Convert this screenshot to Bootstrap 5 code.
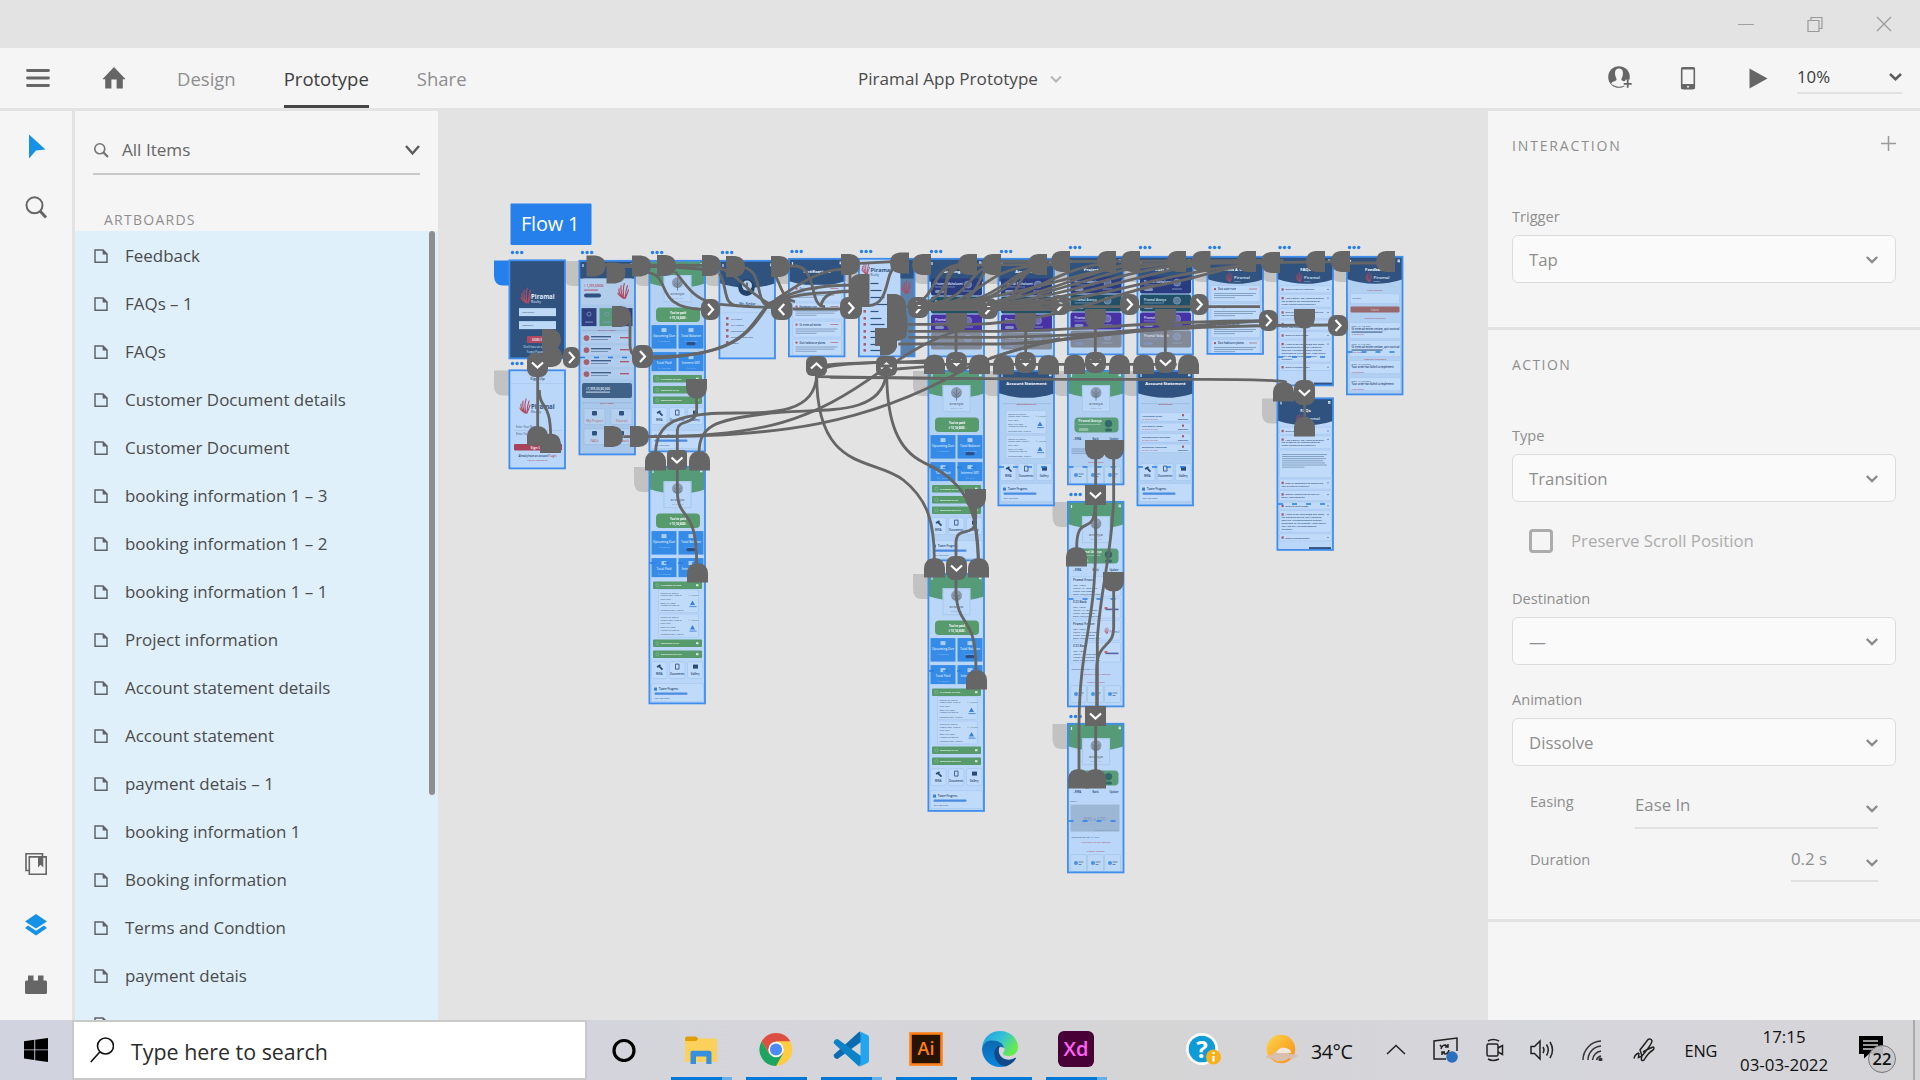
<!DOCTYPE html>
<html lang="en">
<head>
<meta charset="utf-8">
<title>Piramal App Prototype</title>
<link href="https://cdn.jsdelivr.net/npm/bootstrap@5.3.0/dist/css/bootstrap.min.css" rel="stylesheet">
<style>
body{width:1920px;height:1080px;overflow:hidden;background:#e3e3e3;font-family:"Open Sans","Noto Sans",sans-serif;font-size:16.8px;line-height:24px;color:#4b4b4b}
svg{display:block;flex:none}
.titlebar{height:48px;padding-right:28px;gap:53px}
.topbar{height:60px;background:#f5f5f5;padding-left:25px;padding-right:18px;margin-bottom:3px}
.mode{height:60px;line-height:61px;font-size:18.5px;color:#8e8e8e;margin-right:48px}
.mode.on{color:#3e3e3e;box-shadow:inset 0 -3px #454545}
.doc-title{left:858px;font-size:17.1px;padding-top:1px}
.zoombox{width:105px;height:32px;border-bottom:2px solid #e1e1e1;margin-left:30px}
.workspace{height:909px}
.rail{width:72px;margin-right:3px;background:#f5f5f5;padding:23px 0 23px}
.layers{width:363px;background:#f5f5f5}
.filterbox{margin:21px 18px 0;height:43px;border-bottom:2px solid #c8c8c8;padding-bottom:5px}
.caps{font-size:14px;letter-spacing:1.4px;color:#8e8e8e;line-height:20px}
.boards{background:#dff0fb;height:789px;overflow:hidden;padding-top:1px}
.board-item{height:48px;padding-left:19px;gap:17px;font-size:16.95px}
.thumb-bar{width:6px;height:564px;top:0;right:3px;background:#8e8e8e;border-radius:3px}
.inspector{width:432px}
.pane{background:#f5f5f5;margin-bottom:3px;padding:0 24px;color:#8e8e8e}
.lbl{font-size:14.6px;line-height:20px}
.pick{height:48px;border:1.5px solid #dcdcdc;border-radius:6px;background:#fafafa;padding:2px 17px 0 16px;margin-top:9px}
.chk{width:24px;height:24px;border:3px solid #acacac;border-radius:4px}
.under{border-bottom:2px solid #e1e1e1}
.taskbar{height:60px;background:linear-gradient(90deg,#d1d3df,#d5d5da 45%,#d5d5d6 60%,#d5d5dc 80%,#d5d5d8)}
.finder{width:515px;height:60px;border:2px solid #c9c9c9;background:#fff;padding-left:16px;font-size:21.4px;color:#2b2b2b;gap:17px}
.app{width:61px;height:60px;margin-right:14px;border-bottom:3px solid #0078d7;padding-right:2px}
.app.multi{border-image:linear-gradient(90deg,#0078d7 80%,#66b0ea 80%) 3}
.app.idle{border-color:transparent}
.tray{color:#111;font-size:17.6px}
.clock{width:110px;font-size:16.9px;line-height:28px}
</style>
<script src="https://cdn.jsdelivr.net/npm/bootstrap@5.3.0/dist/js/bootstrap.bundle.min.js"></script>
</head>
<body class="d-flex flex-column">
<div class="titlebar d-flex align-items-center justify-content-end flex-shrink-0">
  <svg width="16" height="16" stroke="#a0a0a0" fill="none"><path d="M0 8.5H16"/></svg>
  <svg width="16" height="16" stroke="#999" fill="none" stroke-width="1.2"><path d="M1 4.5H12V15.5H1ZM4 4.5V1.5H15V12.5H12"/></svg>
  <svg width="16" height="16" stroke="#999" fill="none" stroke-width="1.2"><path d="M1 1 15 15M15 1 1 15"/></svg>
</div>
<div class="topbar d-flex align-items-center flex-shrink-0 position-relative">
  <svg width="26" height="22" stroke="#666" stroke-width="2.8" stroke-linecap="round"><path d="M2.5 3.5H23.5M2.5 11H23.5M2.5 18.5H23.5"/></svg>
  <svg width="24" height="24" style="margin-left:51px;margin-right:51px" fill="#666"><path d="M12 1 23.6 13.3H20.8V22.5H14.6V13.5H9.4V22.5H3.2V13.3H.4Z"/></svg>
  <span class="mode">Design</span><span class="mode on">Prototype</span><span class="mode">Share</span>
  <div class="doc-title position-absolute d-flex align-items-center"><span>Piramal App Prototype</span>
    <svg width="14" height="10" style="margin-left:11px" fill="none" stroke="#b5b5b5" stroke-width="2"><path d="M2 2.5 7 7.5 12 2.5"/></svg></div>
  <div class="ms-auto d-flex align-items-center">
    <svg width="26" height="26"><circle cx="12" cy="12" r="10.8" fill="#666"/><path d="M12 3.6C7.8 3.6 7.6 8 8.4 11 9 13.2 9.8 13.7 9.5 14.8 9 16.5 5 16.3 4.2 18.8 8 22 14 22.8 18.5 19.8V16.6C15.6 16.2 14.6 15.7 14.4 14.8 14.2 13.7 15 13.2 15.6 11 16.4 8 16.2 3.6 12 3.6Z" fill="#f5f5f5"/><path d="M20.7 14.8V22.8M16.7 18.8H24.7" stroke="#f5f5f5" stroke-width="5"/><path d="M20.7 14.8V22.8M16.7 18.8H24.7" stroke="#666" stroke-width="1.8"/></svg>
    <svg width="16" height="26" style="margin-left:47px" fill="none" stroke="#666"><rect x="1.7" y="2.8" width="12.6" height="21" rx="1.5" stroke-width="1.6"/><path d="M1.5 21.5H14.5" stroke-width="5"/><path d="M1.5 3.5H14.5" stroke-width="2"/><circle cx="8" cy="21.8" r="1" fill="#f5f5f5" stroke="none"/></svg>
    <svg width="20" height="24" style="margin-left:52px" fill="#666"><path d="M1.5 2.4 19.5 12.5 1.5 22.6Z"/></svg>
    <div class="zoombox d-flex justify-content-between align-items-start" style="margin-left:29px"><span style="color:#3c3c3c;padding-top:3px">10%</span><svg width="14" height="26" fill="none" stroke="#5c5c5c" stroke-width="2.5"><path d="M2 12 7.5 17.2 13 12"/></svg></div>
  </div>
</div>
<div class="workspace d-flex flex-shrink-0">
  <nav class="rail d-flex flex-column align-items-center">
    <svg width="20" height="26" style="margin-left:2px" fill="#1592e6"><path d="M2 .5V24.5L9 16.5 18.5 15.5Z"/></svg>
    <svg width="24" height="24" style="margin-top:35px" fill="none" stroke="#666" stroke-width="2"><circle cx="10.5" cy="10.3" r="8"/><path d="M16 16 22 22.5" stroke-width="3"/></svg>
    <svg width="24" height="24" class="mt-auto" fill="none" stroke="#666" stroke-width="1.6"><path d="M5 18.5H2V1.7H18.5V4.5"/><path d="M5.3 4.9H22.2V22.3H5.3Z"/><path d="M14 5H19.3V15.5L16.6 12.8 14 15.5Z" fill="#666" stroke="none"/></svg>
    <svg width="24" height="24" style="margin-top:37px" fill="#1592e6"><path d="M12 1 23 8.5 12 15.5 1 8.5Z"/><path d="M4 12.5 12 17.8 20 12.5 23 15 12 22.5 1 15Z"/></svg>
    <svg width="24" height="24" style="margin-top:36px" fill="#666"><path d="M2.5 7.5H4V2.5H9.5V7.5H14V2.5H19.5V7.5H21.5Q23 7.5 23 9V19.5Q23 21 21.5 21H2.5Q1 21 1 19.5V9Q1 7.500 2.5 7.5Z"/></svg>
  </nav>
  <aside class="layers">
    <div class="filterbox d-flex align-items-center">
      <svg width="16" height="16" fill="none" stroke="#757575" stroke-width="1.6"><circle cx="6.8" cy="6.8" r="5"/><path d="M10.4 10.4 15 15" stroke-width="2.2"/></svg>
      <span style="margin-left:13px;color:#666;font-size:17.1px">All Items</span>
      <svg width="16" height="12" class="ms-auto" fill="none" stroke="#5c5c5c" stroke-width="2.4"><path d="M2 2 8.5 9.5 15 2"/></svg>
    </div>
    <div class="caps" style="padding:35px 0 1px 29px;letter-spacing:1.25px">ARTBOARDS</div>
    <div class="boards position-relative" id="boards"><div class="thumb-bar position-absolute"></div></div>
  </aside>
  <main style="width:1050px"><svg id="canvas" width="1050" height="909" viewBox="438 111 1050 909"></svg></main>
  <aside class="inspector d-flex flex-column">
    <section class="pane" style="height:216px;padding-top:25px">
      <div class="d-flex justify-content-between"><span class="caps" style="letter-spacing:1.85px">INTERACTION</span><svg width="16" height="16" stroke="#999" stroke-width="1.5"><path d="M8.500 0V15M1 7.5H16"/></svg></div>
      <div class="lbl" style="margin-top:50px">Trigger</div>
      <div class="pick d-flex align-items-center justify-content-between"><span>Tap</span><svg width="12" height="9" class="cv"></svg></div>
    </section>
    <section class="pane" style="height:589px;padding-top:25px">
      <div class="caps">ACTION</div>
      <div class="lbl" style="margin-top:50px">Type</div>
      <div class="pick d-flex align-items-center justify-content-between"><span>Transition</span><svg class="cv"></svg></div>
      <div class="d-flex align-items-center" style="margin:26px 0 34px 17px;height:26px;gap:18px;color:#acacac"><span class="chk"></span><span>Preserve Scroll Position</span></div>
      <div class="lbl">Destination</div>
      <div class="pick d-flex align-items-center justify-content-between"><span>—</span><svg class="cv"></svg></div>
      <div class="lbl" style="margin-top:24px">Animation</div>
      <div class="pick d-flex align-items-center justify-content-between"><span>Dissolve</span><svg class="cv"></svg></div>
      <div class="d-flex justify-content-between" style="padding:25px 18px 0"><span class="lbl">Easing</span><div class="under d-flex justify-content-between" style="width:243px;height:38px;padding-top:2px"><span>Ease In</span><svg class="cv" style="margin-top:11px"></svg></div></div>
      <div class="d-flex justify-content-between" style="padding:18px 18px 0"><span class="lbl" style="margin-top:2px">Duration</span><div class="under d-flex justify-content-between" style="width:87px;height:35px"><span>0.2 s</span><svg class="cv" style="margin-top:11px"></svg></div></div>
    </section>
    <section class="pane flex-grow-1 mb-0"></section>
  </aside>
</div>
<footer class="taskbar d-flex flex-shrink-0 align-items-center">
  <svg width="24" height="24" style="margin:0 24px" fill="#000"><path d="M0 3.3 10.3 1.8V11.4H0ZM11.2 1.7 24 0V11.4H11.2ZM0 12.3H10.3V22L0 20.6ZM11.2 12.3H24V24L11.2 22.2Z"/></svg>
  <div class="finder d-flex align-items-center"><svg width="24" height="26" fill="none" stroke="#111" stroke-width="1.6"><circle cx="15.5" cy="9" r="8"/><path d="M10 14.8.8 25"/></svg><span style="padding-top:3px">Type here to search</span></div>
  <div class="d-flex" style="margin-left:9px">
    <span class="app idle d-flex justify-content-center align-items-center" style="padding-right:6px"><svg width="26" height="26" fill="none" stroke="#000" stroke-width="3.2"><circle cx="13" cy="14.500" r="10"/></svg></span>
    <span class="app multi d-flex justify-content-center align-items-center" style="padding-top:2px"><svg width="34" height="30"><path d="M1 4Q1 1.5 3 1.5H12L15.5 5H32Q33 5 33 6V12H1Z" fill="#e19d05"/><path d="M1 6H12L15 3.6H32Q33 3.6 33 5V27H1Z" fill="#fcd15b"/><path d="M6.5 29V18Q6.5 15.8 8.5 15.8H25.5Q27.5 15.8 27.5 18V29H22.3V21.5H12V29Z" fill="#3690dc"/></svg></span>
    <span class="app d-flex justify-content-center align-items-center"><svg width="34" height="34" viewBox="-17 -17.500 34 34"><circle r="16.3" fill="#fdcc42"/><path d="M-14.3-8.25A16.5 16.5 0 0 1 14.3-8.25L0-8.25-7.1 4.1Z" fill="#dd4f43"/><path d="M-14.3-8.25A16.5 16.5 0 0 0 0 16.5L7.1 4.1H-7.1Z" fill="#1da362"/><circle r="7.7" fill="#fff"/><circle r="6.1" fill="#4c8bf5"/></svg></span>
    <span class="app multi d-flex justify-content-center align-items-center"><svg width="36" height="36"><path d="M1.5 26.5Q0 25 1 23.5L26.5.5 28 3V11L4.5 28Q3 28 1.5 26.5Z" fill="#0a6cae"/><path d="M1 12.5Q0 11 1.500 9.5L3.5 8Q5 8 6 9L28 25V33L26 35.5Z" fill="#0c83c8"/><path d="M26.5.3 35 4.3Q36 5 36 6.5V29.5Q36 31 35 31.8L26.5 35.8Q27.5 35 27.5 33V3Q27.5 1 26.5.3Z" fill="#24a5f0"/></svg></span>
    <span class="app d-flex justify-content-center align-items-center"><svg width="34" height="34"><rect x="1.5" y="1.5" width="31" height="31" fill="#261300" stroke="#ff7f18" stroke-width="2.6"/><text x="17" y="23" text-anchor="middle" font-size="18" font-weight="600" fill="#ff7f18">Ai</text></svg></span>
    <span class="app d-flex justify-content-center align-items-center"><svg width="38" height="36"><defs><linearGradient id="ea" x1="0" y1="0" x2="1" y2=".5"><stop offset="0" stop-color="#1b9de2"/><stop offset=".55" stop-color="#35c1d8"/><stop offset="1" stop-color="#66eb4e"/></linearGradient><linearGradient id="eb" x1="0" y1="0" x2="0" y2="1"><stop offset="0" stop-color="#0f68ae"/><stop offset="1" stop-color="#0a86e0"/></linearGradient></defs><path d="M0 17C1 6 9 0 18 0 29 0 36 8 36 16 36 22 31 25 27 25 23 25 20.500 23.500 21 22 23 20 23 18 22 16.500 19 11 4 8 0 17Z" fill="url(#ea)"/><path d="M0 18C1 12 5 9.500 10 9.500 17 9.500 21.500 13 22 17 15 13 10 22 16 29.500 18 33 22 35 24 35.200 10 39 0 29 0 18Z" fill="url(#eb)"/><path d="M18 14.500C12 16 11 23 14 29 17 34 21 36 25 35 29 33.500 33 30 34 27 33 26 31 29 26.500 28.700 19 28.500 14.500 22 18 14.500Z" fill="#114a8b"/></svg></span>
    <span class="app multi d-flex justify-content-center align-items-center"><svg width="36" height="36"><rect width="36" height="36" rx="6" fill="#470137"/><text x="18" y="25" text-anchor="middle" font-size="20" font-weight="600" textLength="25" fill="#ff61f6">Xd</text></svg></span>
  </div>
  <div class="tray d-flex align-items-center" style="margin-left:65px">
    <svg width="36" height="36"><ellipse cx="16" cy="17" rx="16" ry="16" fill="#fff"/><circle cx="16" cy="17" r="13.3" fill="#0f9ad8"/><text x="16" y="26" text-anchor="middle" font-size="24" font-weight="700" fill="#fff">?</text><circle cx="27.5" cy="25" r="7.5" fill="#f8b11c"/><path d="M27.5 24V29.5M27.5 20V22" stroke="#fff" stroke-width="2.2"/></svg>
    <svg width="36" height="36" style="margin-left:42px"><defs><linearGradient id="sun" x1="0" y1="0" x2="1" y2="1"><stop offset="0" stop-color="#fcd64b"/><stop offset="1" stop-color="#f98b12"/></linearGradient></defs><circle cx="17" cy="17" r="14.3" fill="url(#sun)"/><path d="M2 26Q1 23 8 23 12 17 18 18 24 18 25 22 34 22 34 24 30 27 24 26.5 22 30 12 29 9 26 2 26Z" fill="#d8bfae"/><path d="M12 21Q16 14 22 16 28 18 27 21Z" fill="#efe6dc"/></svg>
    <span style="margin-left:11px;font-size:19.6px;padding-top:4px;letter-spacing:-.4px">34°C</span>
    <svg width="20" height="14" style="margin-left:33px" fill="none" stroke="#222" stroke-width="1.5"><path d="M1 11 10 2.5 19 11"/></svg>
    <svg width="26" height="26" style="margin-left:27px" fill="none" stroke="#222" stroke-width="1.5"><path d="M24 14V1L1 4V22H13M7 8 9 10.500M8 12Q9 8 12.500 8L15 10M15 7V10H12M16 13Q15 17 12 17L9 15M9 18V15H12"/><circle cx="19" cy="20" r="5.8" fill="#2b6fbd" stroke="none"/></svg>
    <svg width="18" height="24" style="margin-left:27px" fill="none" stroke="#222" stroke-width="1.5"><rect x="1" y="6" width="11" height="12" rx="1.5"/><path d="M12 10 16.5 7.5V16.5L12 14M2 3Q7 0 13 3M2 21Q7 24 13 21"/></svg>
    <svg width="26" height="24" style="margin-left:26px" fill="none" stroke="#222" stroke-width="1.5"><path d="M1 8.5H4.5L10 3V21L4.5 15.5H1ZM13 9Q15 12 13 15M16.5 6.5Q20 12 16.5 17.5M20 4Q25 12 20 20"/></svg>
    <svg width="22" height="22" style="margin-left:26px" fill="none" stroke="#333" stroke-width="1.5"><path d="M1 21A19 19 0 0 1 19 2M6 21A14 14 0 0 1 19 7M10.5 21A10 10 0 0 1 19 12M14.5 21A6 6 0 0 1 19 17"/><circle cx="18.5" cy="20.5" r="1.3" fill="#333"/></svg>
    <svg width="24" height="24" style="margin-left:29px" fill="none" stroke="#222" stroke-width="1.5"><path d="M9 18 7 12 15 1.5Q18 0 19 3 19 6 9 18L5.5 19.5 6 15M1 20.5Q2 16 6 15M10 14Q15 11 20 9 22 10 20 12 15 15 11 22 7 24 9 18"/></svg>
    <span style="margin-left:28px;font-size:16.3px;letter-spacing:-.2px;padding-top:1px">ENG</span>
    <div class="clock text-center" style="margin-left:12px;padding-top:1px">17:15<br>03-03-2022</div>
    <svg width="40" height="46" style="margin-left:19px"><path d="M1 9H25V27H11L6 31.5V27H1Z"/><path d="M5 14H20M5 18H20M5 22H16" stroke="#ccc" stroke-width="1.5"/><circle cx="24" cy="32" r="13.500" fill="#c9c9cc" fill-opacity=".9" stroke="#777"/><text x="24" y="38" text-anchor="middle" font-size="16.5" font-weight="600" fill="#111">22</text></svg>
  </div>
  <span class="ms-auto" style="width:2px;height:60px;background:#a9a9ae;margin-right:5px"></span>
</footer>
<script>
// layer list
const names=['Feedback','FAQs – 1','FAQs','Customer Document details','Customer Document','booking information 1 – 3','booking information 1 – 2','booking information 1 – 1','Project information','Account statement details','Account statement','payment detais – 1','booking information 1','Booking information','Terms and Condtion','payment detais',''];
document.getElementById('boards').insertAdjacentHTML('beforeend',names.map(n=>`<div class="board-item d-flex align-items-center"><svg width="14" height="16" fill="none" stroke="#5f6468" stroke-width="1.5"><path d="M1 2H9L13 6V14.2H1Z"/><path d="M8.6 1.6 13.4 6.4H8.6Z" fill="#5f6468" stroke="none"/></svg><span>${n}</span></div>`).join(''));
document.querySelectorAll('.cv').forEach(s=>{s.setAttribute('width',14);s.setAttribute('height',10);s.style.marginRight='-1px';s.innerHTML='<path d="M1.8 2 7 7 12.2 2" fill="none" stroke="#8a8a8a" stroke-width="2.4"/>'});

// artboard drawing helpers, in artboard-local pixels (57 wide)
const NV='#30527f',GR='#569b78',LT='#bad7f9',BL='#358be5';
const R=(x,y,w,h,f,r=0,e='')=>`<rect x="${x}" y="${y}" width="${w}" height="${h}" fill="${f}" rx="${r}" ${e}/>`;
const T=(x,y,s,t,f='#34506f',a='start',w=400)=>`<text x="${x}" y="${y}" font-size="${s}" fill="${f}" text-anchor="${a}" font-weight="${w}">${t}</text>`;
const card=(x,y,w,h)=>R(x,y,w,h,'#c0dafa',1,'stroke="#a5c5ec" stroke-width=".6"');
const ham='<path d="M4 3.5v3M51 3.5h2.5M51 5h2.5" stroke="#cfe2f7" stroke-width="1.2"/>';
const head=(c,t)=>`<path d="M0 0H57V22.5Q28.5 32 0 22.5Z" fill="${c}"/>`+ham+(t?T(28.5,14,4.2,t,'#fff','middle',700):'');
const hand=(x,y,s,c='#b04a60')=>`<g transform="translate(${x} ${y}) scale(${s})" fill="none" stroke="${c}" stroke-width="1.1" stroke-linecap="round"><path d="M5 14Q0 8 1 5M5 14Q2 7 3 2M6 14Q4 7 6 0M7 14Q7 7 9 2M7 14Q9 9 10 6M6 14Q1 12 0 9"/></g>`;
const logoG=R(15,15,27,26,LT,0,'stroke="#a9cbe9" stroke-width="1.2"')+'<circle cx="28.5" cy="22" r="5.5" fill="#8c9cae"/><path d="M28.5 18V30M25 21 28.500 25 32 21M24.500 24 28.500 27 32.500 24" stroke="#5f7187" stroke-width=".8" fill="none"/>'+T(28.500,34,4,'aranya','#74879c','middle',700)+T(28.5,38,2.2,'Sector 129','#8798ac','middle');
const tile=(x,y,h,a,b)=>R(x,y,25,h,BL)+R(x+10,y+3,5,4,'#a9cff8')+T(x+12.5,y+12,3.1,a,'#d6e9fd','middle',600)+T(x+12.5,y+16.5,2.5,b,'#9dc8f7','middle');
const gbar=(y,t)=>R(4,y,49,7.5,'#579a6c',1)+`<circle cx="8.5" cy="${y+3.7}" r="1.6" fill="none" stroke="#8fc09c" stroke-width=".6"/>`+T(12,y+4.8,2.3,t,'#eef8ee','start',700)+R(47,y+2.6,2.5,2,'#d3ecd8');
const trio=(y,g=0)=>g?[3,20,37].map(x=>R(x,y,16,17,'#bcd8f8',1,'stroke="#9fc6e2" stroke-width=".7"')+`<circle cx="${x+5.500}" cy="${y+8.500}" r="2" fill="#4d92e2"/>`+R(x+8,y+7,5,.8,'#4f7297')+R(x+8,y+9.5,3,.8,'#4f7297')).join(''):
 [[2.5,'RERA'],[20.500,'Documents'],[38.500,'Gallery']].map(([x,t],i)=>R(x,y,15.5,17,'#bfdafa',2,'stroke="#a2c6ef" stroke-width=".7"')+(i==0?`<path d="M${x+5.500} ${y+5.500}l3.500 -2M${x+7.500} ${y+4.500}l3.500 3.500" stroke="#2b4a73" stroke-width="1.700"/>`:i==1?`<path d="M${x+6} ${y+2.500}h3.500v5h-3.500z" fill="none" stroke="#2b4a73" stroke-width=".8"/>`:R(x+5.500,y+3,5,4,'#2b4a73'))+T(x+7.7,y+13.500,2.600,t,'#20406a','middle',600)).join('');
const prog=y=>card(2.5,y,52,18)+R(5,y+4,3,3,'#3a80d8')+T(10,y+6.5,2.6,'Tower Progress','#20406a','start',600)+R(5.500,y+9,33,2.2,'#4a8be0',1)+T(5.500,y+15,2.3,'72%: On Time');
const stat=(x,y,w)=>card(x,y,w,23)+T(x+2,y+4,2,'Receipt No: 789542')+T(x+2,y+6.500,2,'Cheque Date: 12/05/21')+T(x+2,y+10,2,'Type: NEFT')+T(x+2,y+14,2,'Bank: ICICI Bank')+T(x+2,y+16.500,2,'Account No: 000123')+T(x+2,y+21,2,'Collection Date: 12/05/21')+T(x+w-10,y+6.500,2.1,'₹ 1,02,000','#4d7d6f')+`<path d="M${x+w-6} ${y+11}l2.500 4.500h-5z" fill="#3a7edb"/>`+R(x+w-9,y+16.500,7,1,'#4b88dc');
const dash=open=>head(GR)+logoG+R(7,47,44,14.5,'#579a6c',4)+T(29,53,2.800,'You’ve paid','#fff','middle',700)+T(29,58,2.800,'₹ 13,14,668/-','#fff','middle',700)
 +tile(2.5,64.500,23.500,'Upcoming Due','₹ 52,08.00')+tile(29.500,64.500,23.500,'Total Balance','₹ 10,50,000')+R(37.500,81.500,9,3.200,'#2b4f86',1.500)+tile(2.5,91.500,19,'Total Paid','₹64,50,650')+tile(29.500,91.500,19,'Interest GST','₹71,245')
 +(open?gbar(115,'PAYMENT STATUS')+stat(9.500,123,40)+stat(9.500,147.500,40)+gbar(173,'BOOKING PLAN')+gbar(184,'BOOKING DETAILS')+trio(195)+prog(217)
 :gbar(114.5,'PAYMENT STATUS')+gbar(125.500,'BOOKING PLAN')+gbar(136,'BOOKING DETAILS')+trio(147)+prog(170));
const proj=t=>R(0,0,57,99,'#b5d3f5')+head(NV,t)+[['#2a3c80','Piramal Mahalaxmi'],['#215168','Piramal Aranya'],['#4931a6','Piramal Revanta'],['#828a98','Piramal Vaikunth']].map(([c,n],i)=>R(3,20+i*18,51,17,c,2)+T(7,26+i*18,3,n,'#dfe6f5','start',600)+R(7,28+i*18,20,.7,'#8d9cc4')+R(7,31.500+i*18,9,3,'#8292b8',1.500)+`<circle cx="40" cy="${26+i*18}" r="3.500" fill="#93a3c8" fill-opacity=".5" stroke="#93a3c8" stroke-width=".7"/>`+R(35,32+i*18,10,.8,'#93a3c8')).join('');
const para=(x,y,w,n)=>Array.from({length:n},(_,i)=>R(x,y+i*2.1,i==n-1?w*.5:w-(i*3%5),.8,'#7493b6')).join('');
const notif=(y0)=>[['Duis aute irure',0],['Excepteur sint',18],['Ut enim ad minim',36],['Duis habitasse platea',54]].map(([t,d])=>card(4,y0+d,49,16)+R(7,y0+d+2.500,2,2,'#b0506a')+T(11,y0+d+4.800,2.500,t,'#20406a','start',600)+R(42,y0+d+3,8,.8,'#b47082')+para(7,y0+d+7.500,42,3)).join('');
const brand=(x,y)=>hand(x,y,.62)+T(x+8,y+6,4.300,'Piramal','#dbe8f7','start',600)+T(x+8,y+9,2.300,'Realty','#c8d7ea');
// FAQ entries are stored line by line
const faqs=(y,h,ex)=>{let s='';const q=[['What is TDS on Property?'],['I am a Buyer. Do I need to deduct','tax at source for consideration of','under construction property?'],...(ex?[[]]:[]),['Who is responsible to deduct the','TDS on sale of Property?'],['Would I deduct tax on the full','seller, not Resident?'],['What is Form 26QB?'],['I have filled Form 26QB and made','the payment online, but I forgot to','save the Acknowledgment Number','generated at TIN website. From where','can I get the Acknowledgment','Number?'],['What is Registration?']];
 for(const ls of q){const n=ls.length||8,hh=n*2.900+4.300;if(y+hh>h)break;s+=card(2.5,y,52,hh);if(!ls.length)s+=para(5,y+4,45,7);else{s+=R(4.500,y+2.700,2.200,2.400,'#a8596f')+ls.map((l,k)=>T(k?4.500:8.300,y+4.900+k*2.900,2.400,l,'#2c4b74','start',600)).join('')+R(50,y+3.500,2,.7,'#5d7ea5')}y+=hh+1.400}return s};
const pinfo=()=>head(GR)+logoG+R(7,47,44,15,'#5a9b7a',4)+T(11,51.500,3,'Piramal Aranya','#dff1e5','start',700)+R(11,53.500,22,.8,'#94c4a8')+R(11,57.500,10,3,'#8dbf9f',1.500)+'<circle cx="41" cy="53" r="3.700" fill="#2f6a66"/>'+R(37.500,58,7,3,'#2f6a66',1.500)+T(6,69.500,2.500,'▪ RERA','#20406a','start',600)+T(25,69.500,2.500,'Bank','#20406a','start',600)+T(42,69.500,2.500,'Update','#20406a','start',600);
const signin=R(0,0,57,99,NV)+hand(12,28,1.05)+T(22,39,6.100,'Piramal','#dfeaf7','start',700)+T(22,43,3.500,'Realty','#dfeaf7')+R(10,48,37,8,'#bcd9f8')+T(13,53,2.500,'Username')+R(10,61,37,8,'#bcd9f8')+T(13,66,2.500,'Password')+R(18,76,22,7,'#b04a60',1)+T(29,81,3.200,'SIGN IN','#fff','middle',600)+T(28.500,88,2.600,'Don’t have an account?','#dfeaf7','middle')+T(28.500,92.500,2.600,'Forgot Password?','#dfeaf7','middle');
const content={
signin,
signup:T(28.500,10,4,'Sign Up','#34506f','middle',600)+R(2,13,53,.6,'#a6c5ea')+hand(11,29,1)+T(22,39,6.100,'Piramal',NV,'start',700)+T(22,43,3.500,'Realty',NV)+T(7,58,2.700,'Enter Your Name')+R(4,60,49,.5,'#9fb9da')+T(7,65,2.700,'Enter Your Email')+R(5,74,48,6.300,'#a84258',1)+T(28,78.500,3.500,'Sign Up','#fff','middle',600)+T(28.500,86.500,2.500,'Already have an account? <tspan fill="#b04a60">Login</tspan>','#20406a','middle',600)+T(28.500,90.500,2.500,'Forgot Password?','#b04a60','middle'),
home:R(0,0,57,195,'#a9c7e9')+R(0,0,57,18,NV)+ham+R(2.500,18,52,26,'#b2cdec',3)+T(5,26,3,'₹ 1,255,00000','#b04a60','start',600)+R(5,29,14,.9,'#b04a60')+R(5,33,17,4,NV,2)+hand(39,23,1.05)
 +R(2.500,47.500,15,18,'#2e3f80')+R(20.500,47.500,15,18,'#579a7a')+R(38.500,47.500,15,18,'#2e3f80')+[10,28,46].map(x=>`<circle cx="${x}" cy="53.500" r="2" fill="none" stroke="#7f97c2" stroke-width=".8"/>`+R(x-4,61,8,1,'#7f97c2')).join('')+R(3,69.500,50,.6,'#91afd2')+T(28,70.800,2.100,'RECENT PAYMENT','#a84a60','middle',600)
 +[77.500,89.500,101.500,113.500].map(y=>R(3,y-4.500,51,9.500,'#b1ccec',1)+`<circle cx="7.500" cy="${y}" r="2.900" fill="#a5606c"/>`+R(12,y-2,20,1.200,'#33507a')+R(12,y+1,17,.9,'#6e89ac')+R(41,y-1,9,1.200,'#b04a60')).join('')
 +R(3,122.500,50,15,'#416288',2)+T(7,129,3,'₹1,955,00,80,000','#eaf3ff','start',600)+R(7,131,24,1,'#cfe0f5')+R(3,142,50,.6,'#91afd2')+T(28,143.200,2.200,'QUICK MENU','#a84a60','middle',600)
 +[[5,148,'My Project'],[32,148,'Tutorial'],[5,168,'FAQs'],[32,168,'Feedback']].map(([x,y,t])=>R(x,y,21,16,'#b5cfee',1,'stroke="#9cbcdf" stroke-width=".7"')+R(x+8,y+2.500,5,4.500,NV,1)+T(x+10.500,y+13,3.400,t,'#b05a6a','middle')).join(''),
dash:R(0,0,57,192,'#b3d1f3')+dash(0),open:dash(1),
profile:head(NV)+'<circle cx="27.500" cy="27" r="8.300" fill="#224267"/><circle cx="28" cy="25" r="5" fill="#b9cfe8"/><path d="M28 22v6l3 2" stroke="#30527f" stroke-width="1.500" fill="none"/>'+T(28.500,44,3.500,'Mr. Kedar','#30527f','middle',600)+R(3,52,50,.5,'#a3c2e8')+[58,64,70,76,82].map((y,i)=>R(7,y-1.500,2.500,2.500,'#a9586b')+T(12,y+1,2.400,['My Profile','My Account','Documents','Terms & Conditions','Logout'][i],'#20406a')).join(''),
notes:head(NV,'Notifications')+notif(26.500),
terms:R(0,0,57,98,'#b1cff1')+head(NV,'Terms & Cond')+brand(19,16)+notif(29),
menu:R(0,0,42,99,LT)+R(42,0,15,99,'#5b80aa')+R(42,0,15,20,NV)+hand(3,4,.8)+T(12,13,5.500,'Piramal',NV,'start',700)+T(12,17,3,'Realty',NV)+hand(43,22,.9)+[25,32,39,46,53,60,66,73,79,86,92].map((y,i)=>R(5,y-1.500,2.500,2.500,'#a9586b')+R(12,y-.7,8+i%4*3,1.200,'#31547f')).join(''),
proj1:proj('Booking Info'),proj2:proj('Account St'),proj3:proj('Project Info'),proj4:proj('Cust. Docs'),
statement:R(0,0,57,135,'#b1cff1')+head(NV,'Account Statement')+R(4,33,49,.5,'#8fa9cf')+T(28.500,34,2.200,'BOOKING DETAILS','#a84258','middle',600)+stat(8,40,40)+stat(8,65,40)+trio(93)+prog(113),
docs:R(0,0,57,135,'#b1cff1')+head(NV,'Account Statement')+R(4,33,49,.5,'#8fa9cf')+T(28.500,34,2.200,'DOCUMENTS','#a84258','middle',600)+['Agreement to sell','Title search report','Encumbrance certificate','Occupancy certificate'].map((t,i)=>card(3,42+i*10.500,51,8.500)+T(5,46+i*10.500,2.400,t,'#20406a','start',600)+T(5,49.300+i*10.500,2.100,'on 2nd Nov 2021','#a05a70')+R(45,43.500+i*10.500,2,2.200,'#a05a70')+T(46,49.300+i*10.500,2.100,'Download','#20406a','middle',600)).join('')+trio(93)+prog(113),
pinfo:R(0,0,57,114,'#b1cff1')+pinfo()+para(4,78,40,3)+T(28.500,92,2.500,'Other Project','#a84258','middle')+trio(96,1),
banks:pinfo()+[['Piramal Finance',75],['ICICI Bank',97],['Piramal Finance',119],['ICICI Bank',141]].map(([t,y],i)=>card(3,y,50,19.500)+T(5.500,y+4,2.800,t,'#20406a','start',600)+T(5.500,y+9,2.300,'IFSC: Admin','#20406a')+T(5.500,y+12,2.300,'Mobile: +91 7890 0000','#20406a')+T(5.500,y+15,2.300,'Phone: 022 7000000','#20406a')+T(5.500,y+18,2.300,'Email: help@piramal.com','#20406a')+(i%2?R(38,y+10,13,1.600,'#5563a8')+R(37,y+8.500,3,2,'#c26060'):hand(37,y+7,.4)+T(42,y+12,2.800,'Piramal','#51618d'))).join('')+T(4,168,2.500,'Registration no: <tspan fill="#3a80d8">P51800</tspan>')+T(28.500,173,2.500,'Click here to visit website','#a84258','middle')+T(28.500,181,2.500,'Project Partner','#a84258','middle')+trio(184,1),
update:pinfo()+T(3,78,2.500,'Date 1')+R(3,81,49,27,'#9cb6d6')+T(27,97,5,'300 x 170','#7890ae','middle')+T(51,107,2.200,'Powered by HTML.COM','#7890ae','end')+T(4,114,2.500,'Registration no: <tspan fill="#3a80d8">P51800</tspan>')+T(28.500,119,2.500,'Click here to visit website','#a84258','middle')+T(28.500,128,2.500,'Project Partner','#a84258','middle')+trio(131,1),
faq:head(NV,'FAQs')+brand(19,16)+faqs(29,126)+R(37,126,20,4,NV),
faq2:head(NV,'FAQs')+brand(19,16)+faqs(29,150,1)+R(32,149,22,4,NV),
feedback:R(0,0,57,139,'#b1cff1')+head(NV,'Feedback')+brand(19,16)+T(28.500,34,2.500,'New Request','#a84258','middle')+card(4,37,49,10)+T(6,42,2.500,'Subject')+R(4,50,49,6,'#98686f',1)+T(28.500,54,2.600,'Submit','#d9c9d2','middle')+T(28.500,62,2.500,'Pending Requests','#a84258','middle')+T(28.500,103,2.500,'Resolved Requests','#a84258','middle')+[69,87,107,124].map((y,i)=>card(3,y-3,51,i>1?13:16)+T(5,y+1,2.300,'Date: 19 Aug 2021')+T(5,y+4.500,2.500,i>1?'Your order has failed to implement':'Ut enim ad minim veniam, quis nostrud','#20406a','start',600)+(i>1?'':R(5,y+6,31,.9,'#20406a'))+T(5,y+9.500,2.300,'View Status','#a84258')).join('')
};
const art=[[509,260.5,98.5,'signin'],[509,370.5,98.5,'signup'],[579,261,194,'home'],[649,261,191,'dash'],[649,467,237,'open'],[719,261,98,'profile'],[788.5,259,98,'notes'],[858.5,259,98,'menu'],[928,259,98,'proj1'],[998,259,98,'proj2'],[1067.500,257,98,'proj3'],[1137,257,98,'proj4'],[1207,257,97.500,'terms'],[1277,257,129,'faq'],[1346.500,257,138,'feedback'],[928,371,190,'dash'],[928,574,237.500,'open'],[998,371,135,'statement'],[1067.500,371,114,'pinfo'],[1067.500,502,205,'banks'],[1067.500,724,149,'update'],[1137,371,135,'docs'],[1277,398.500,152,'faq2']];
let s='<defs>'+art.map((a,i)=>`<clipPath id="c${i}"><rect width="56" height="${a[2]}"/></clipPath>`).join('')+'</defs>';
art.forEach(([x,y,h,k],i)=>{
 s+=`<path d="M${x} ${y}h-15v15q0 10 9 10h6z" fill="${i?'#c2c2c2':'#2680eb'}"/>`;
});
art.forEach(([x,y,h,k],i)=>{
 s+=`<g transform="translate(${x} ${y-.4})"><g clip-path="url(#c${i})">${R(0,0,57,h,LT)}${content[k]}</g>${R(.4,.2,55.600,h-.4,'none',0,'stroke="#3f8ded" stroke-width="1.800"')}</g>`;
});
// viewport fold lines
[[579,357.500],[649,563],[928,467.500],[928,671],[998,467],[1067.500,467],[1137,467],[1067.500,599],[1067.500,821],[1277,357],[1277,504],[1346.500,352]].forEach(([x,y])=>s+=`<path d="M${x+1} ${y}h56" stroke="#2680eb" stroke-width="1.300" stroke-dasharray="5 9"/>`);
// artboard menus
[[511,252.500],[511,363.500],[581,252.500],[651,252.500],[721,252.500],[790.500,251.500],[860,251.500],[930,251.500],[1000,251.500],[1069,247.500],[1139,247.500],[1208.500,247.500],[1278.500,247.500],[1348,247.500],[1069.500,494.500],[1069.500,716.500]].forEach(([x,y])=>{for(let i=0;i<3;i++)s+=`<circle cx="${x+1.500+i*4.600}" cy="${y}" r="1.700" fill="#2680eb"/>`});
// wires, drawn on sheets of one-third pixel units
const W=(ox,oy,ps)=>s+=`<g transform="translate(${ox} ${oy}) scale(.33333)" fill="none" stroke="#666" stroke-width="8.500">${ps.map(p=>`<path d="${p}"/>`).join('')}</g>`;
W(480,190,['M173 555V715','M178 600C178 660 212 630 212 740','M240 500H265','M450 380V465C452 495 460 495 475 498','M500 247C580 255 515 355 668 358','M585 245C620 285 640 325 690 335','M370 225 690 226','M430 230H560L700 240','M720 343C800 350 830 352 880 352','M718 250C745 290 725 345 775 348','M715 232C780 255 800 310 875 345','M790 232C855 245 820 345 872 350','M920 228H950C1015 240 985 350 1035 350','M885 255C905 290 905 325 945 335','M1085 238C1010 240 950 290 885 330','M1115 285C1000 287 950 300 868 340','M868 340C810 400 800 500 520 500','M1115 305C960 308 920 320 865 345C800 440 760 495 520 505','M938 357H1080','M1115 303C1060 303 1030 310 1022 350','M1140 220 1240 215','M1242 235C1215 250 1230 345 1165 347','M1110 250V335','M1040 532C1100 515 1240 520 1340 512','M1040 525C1100 518 1240 515 1340 518','M1010 560 1440 566','M1010 555C1005 700 800 660 680 672C590 680 530 700 527 785','M1010 555C1010 850 1180 800 1270 870C1345 930 1363 1000 1363 1110','M1220 555C1222 700 1255 780 1330 817C1450 870 1495 950 1495 1110','M1218 555C1200 690 1000 650 850 672C700 690 660 710 657 785','M650 620V660C645 710 595 685 592 720V785','M430 740H510C900 740 1160 700 1440 545C1500 510 1600 480 1740 445','M510 740C850 740 1000 690 1200 545C1280 495 1350 445 1440 420','M592 840V900C592 1000 650 940 650 1120','M1487 955V985C1487 1050 1428 1000 1428 1060V1110','M1480 940C1482 1000 1494 1050 1495 1110','M1428 1150V1210C1435 1320 1488 1270 1488 1440']);
W(830,235,['M200 402 290 395','M230 215H1290','M240 213C400 205 560 205 700 200','M240 221C420 228 560 222 700 215','M290 206H690','M290 224H690','M235 205C330 205 290 90 400 88','M235 210C380 210 320 90 420 88','M345 190C350 130 345 95 400 90','M235 214C440 210 400 105 490 90','M400 200C460 160 440 110 490 95','M240 217C480 215 420 105 630 90','M250 217C560 215 490 100 690 85','M300 217C580 210 520 90 700 85','M350 217C620 210 640 100 850 82','M300 217C600 215 700 130 900 85','M300 205C560 195 700 120 900 90','M300 220C700 210 800 120 1050 90','M320 222C750 210 850 130 1110 88','M400 222C800 215 900 130 1240 90','M540 190C580 150 560 110 640 95','M620 180 880 105 1050 80','M235 268H420C700 262 850 170 990 150C1100 130 1180 100 1240 92','M235 289H500C800 285 950 258 1290 258','M235 307H500C850 303 1000 270 1500 270','M205 327H500C700 325 850 285 1290 258','M480 370C620 320 800 290 990 282','M430 90 640 88','M480 80 700 78','M690 80 1360 76','M880 88 1540 80','M1540 84H1660','M378 285V355','M587 285V355','M796 275V355','M1006 275V355','M1424 275V440','M1424 500V550','M0 427 700 433H1090C1200 433 1340 432 1370 442','M340 388H1040']);
W(1000,440,['M287 55V140','M341 55V180C335 350 300 450 292 600V800','M287 190V300C287 560 240 600 237 850V990','M285 190C285 300 230 210 230 325','M341 450V560C341 630 290 600 290 690V800','M287 855V990']);
// connector handles: r = rounded right, l = rounded left, u = rounded top, d = rounded bottom
const H={r:'M0 0H9Q19 1 19 10.500T9 21H0Z',l:'M19 0H10Q0 1 0 10.500T10 21H19Z',u:'M0 19.500V10Q1 0 10.500 0T21 10V19.500Z',d:'M0 0V9.500Q1 19.500 10.500 19.500T21 9.500V0Z'};
const P=(k,...ps)=>ps.forEach(([x,y])=>s+=`<path d="${H[k]}" transform="translate(${x} ${y})" fill="#666"/>`);
P('r',[586.500,255.500],[606.500,262.500],[632,255.500],[657,255],[702,255],[726,256],[771,256],[841,254],[612,306],[604,426],[630,426],[542,329],[543,346]);
P('l',[890,252.500],[912,254],[958,254],[982,254],[1028,254],[1051,251],[1097,251],[1121,251],[1167,251],[1191.500,251],[1237,251],[1261,252],[1306,251],[1331,251],[1376,251]);
P('d',[686,379],[946,313],[1015,313],[1085,309],[1155,309],[1294,309],[965,489],[1085,440],[1103,440],[1103,572]);
P('u',[527,426],[540,433.500],[645,451],[689,451],[687,563],[924,354.500],[969,354.500],[993,355],[1038,355],[1064,354.500],[1109,354.500],[1133,354.500],[1178,354.500],[1273,382],[1294,417],[924,558],[968,558],[966,670],[1066,547],[1068,769],[1085,769]);
s+='<path d="M849 285Q851 274 860 274H869.500V307H849ZM887 294H896Q907 296 906 310L908 325 906 337Q903 340 897 341V347Q894 355 886 355.500H880V346H875V328H887Z" fill="#666"/>';
// nodes with a direction chevron: x, y, w, h, corner, direction, partly covered by wires
const N=[[527,353,21,24,8,'d'],[563,347,17,21,7,'r'],[632,345,21,23,8,'r'],[701,299,19,21,8,'r'],[771,299,21.500,21,8,'l'],[840,297,22,22,8,'r'],[806,356,21,20,6,'u'],[876,356,21,20,6,'u',1],[908,297,21,21,8,'r',1],[978,298,20,21,8,'r',1],[1050,295,20,20,8,'r',1],[1120,294,19,21,8,'r'],[1190,294,18.500,21,8,'r'],[1259,310,19,21,8,'r'],[1328,315,20,21,8,'r'],[667,450,20,20,4,'d'],[946,352,21,21,8,'d',1],[1015,352,21,21,8,'d',1],[1085,352,21,21,8,'d',1],[1155,352,21,21,8,'d'],[1294,380,21,25,8,'d'],[946,556,21,24,8,'d'],[1085,485,21,20,0,'d'],[1085,706,21,20,0,'d']];
N.forEach(([x,y,w,h,r,d,dim])=>{const a={d:0,l:90,u:180,r:270}[d];s+=R(x,y,w,h,'#666',r)+`<path d="M-5.500 -2.500 0 2.500 5.500 -2.500" transform="translate(${x+w/2} ${y+h/2}) rotate(${a})" fill="none" stroke="#fff" stroke-width="2.200"/>`+(dim?`<path d="M${x+2} ${y+h/2-(d=='d'?1:0)}H${x+w-2}" stroke="#666" stroke-width="3"/>`+(d=='r'?`<path d="M${x+2} ${y+h/2-4}H${x+w-2}" stroke="#666" stroke-width="3"/>`:''):'')});
s+=R(510.500,203.500,81,41.500,'#2680eb',1)+`<text x="521" y="231.300" font-size="20" textLength="58.500" fill="#fff">Flow 1</text>`;
document.getElementById('canvas').innerHTML=s;
</script>
</body>
</html>
